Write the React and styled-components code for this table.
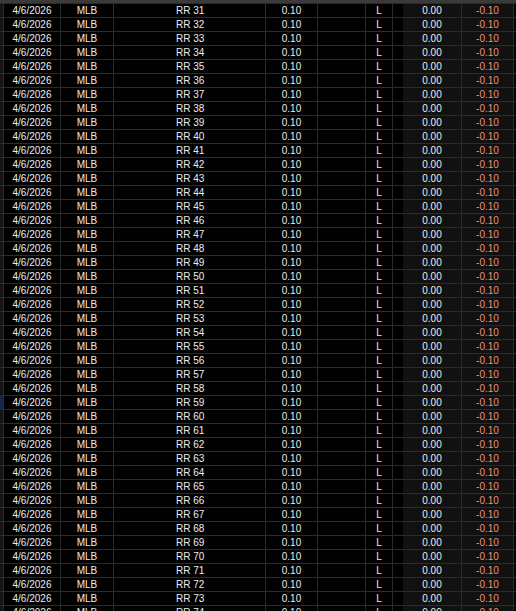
import React from "react";
import styled, { createGlobalStyle } from "styled-components";

const GlobalStyle = createGlobalStyle`
  html, body {
    margin: 0;
    padding: 0;
    background: #000;
  }
`;

const Container = styled.div`
  width: 516px;
  height: 611px;
  overflow: hidden;
  background: #000;
  font-family: "Liberation Sans", Arial, sans-serif;
  font-size: 10px;
  color: #ececec;
`;

const TopBar = styled.div`
  height: 3px;
  background: #3a3a3a;
`;

const Row = styled.div`
  display: grid;
  grid-template-columns: 4px 57px 53px 152px 52px 48px 27px 10px 59px 52px 2px;
  height: 14px;
  box-sizing: border-box;
  border-top: 1px solid #2b2b2b;
`;

const Cell = styled.div`
  box-sizing: border-box;
  border-right: ${(p) => (p.$noLine ? "none" : "1px solid #2b2b2b")};
  background: ${(p) => (p.$shade ? "#111111" : "transparent")};
  color: ${(p) => p.$color || "inherit"};
  text-align: ${(p) => p.$align || "center"};
  padding-left: ${(p) => p.$pad || 0}px;
  line-height: 13px;
  white-space: nowrap;
  overflow: hidden;
`;

const Strip = styled.div`
  box-sizing: border-box;
  border-right: 1px solid #2b2b2b;
  background: ${(p) => (p.$active ? "#15264a" : "#141414")};
`;

const rows = Array.from({ length: 44 }, (_, i) => i + 31);

const App = () => {
  return (
    <Container>
      <GlobalStyle />
      <TopBar />
      {rows.map((n, i) => (
        <Row key={n}>
          <Strip $active={i === 28} />
          <Cell>4/6/2026</Cell>
          <Cell>MLB</Cell>
          <Cell $align="left" $pad={62}>RR {n}</Cell>
          <Cell>0.10</Cell>
          <Cell />
          <Cell>L</Cell>
          <Cell $noLine />
          <Cell $shade>0.00</Cell>
          <Cell $shade $color="#f0907c">-0.10</Cell>
          <Cell $noLine />
        </Row>
      ))}
    </Container>
  );
};

export default App;
